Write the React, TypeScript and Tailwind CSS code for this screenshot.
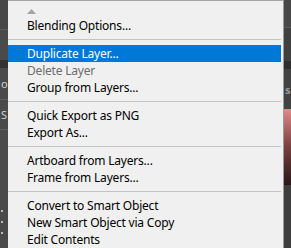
import React from "react";

type Item = { label: string; state?: "hl" | "dis" } | "sep";

const items: Item[] = [
  { label: "Blending Options..." },
  "sep",
  { label: "Duplicate Layer...", state: "hl" },
  { label: "Delete Layer", state: "dis" },
  { label: "Group from Layers..." },
  "sep",
  { label: "Quick Export as PNG" },
  { label: "Export As..." },
  "sep",
  { label: "Artboard from Layers..." },
  { label: "Frame from Layers..." },
  "sep",
  { label: "Convert to Smart Object" },
  { label: "New Smart Object via Copy" },
  { label: "Edit Contents" },
];

export default function App() {
  return (
    <div
      className="w-[291px] h-[248px] overflow-hidden flex bg-[#3c3c3c]"
      style={{ fontFamily: '"Noto Sans", "Open Sans", Arial, sans-serif' }}
    >
      {/* left strip */}
      <div className="w-[8px] shrink-0 flex flex-col bg-[#4a4a4a] text-[11px] leading-none text-[#d0d0d0] overflow-hidden">
        <div className="h-[30px] bg-[#474747] border-b border-[#5c5c5c]" />
        <div className="h-[30px]" />
        <div className="h-[8px] bg-[#323232]" />
        <div className="h-[32px] border-b border-[#5e5e5e] flex items-center pl-[1px]">o</div>
        <div className="h-[30px] border-b border-[#5e5e5e] flex items-center pl-[1px]">S</div>
        <div className="h-[80px]" />
        <div className="flex flex-col gap-[9px] pl-[1px]">
          <div className="w-[2px] h-[2px] bg-[#bbbbbb]" />
          <div className="w-[2px] h-[2px] bg-[#bbbbbb]" />
          <div className="w-[2px] h-[2px] bg-[#bbbbbb]" />
        </div>
      </div>

      {/* menu */}
      <div className="w-[276px] shrink-0 h-full bg-[#f0f0f0] border-t border-[#a6a6a6] border-r border-r-[#9a9a9a] pr-[2px] flex flex-col text-[12px] leading-[17px] tracking-[-0.2px] text-black">
        <div className="h-[20px] pl-[19px] pt-[8px]">
          <svg width="9" height="5" viewBox="0 0 9 5" className="block">
            <polygon points="4.5,0 9,5 0,5" fill="#a3a3a3" />
          </svg>
        </div>
        {items.map((it, i) =>
          it === "sep" ? (
            <div key={i} className="py-[5px]">
              <div className="h-[1px] bg-[#c3c3c3]" />
            </div>
          ) : (
            <div
              key={i}
              className={
                "h-[17px] pl-[19px] whitespace-nowrap " +
                (it.state === "hl"
                  ? "bg-[#0078d7] text-white"
                  : it.state === "dis"
                  ? "text-[#6d6d6d]"
                  : "text-black")
              }
            >
              {it.label}
            </div>
          )
        )}
      </div>

      {/* right strip */}
      <div className="flex-1 flex flex-col bg-[#3a3a3a] text-[11px] leading-none text-[#9a9a9a] overflow-hidden">
        <div className="h-[28px] bg-[#484848] border-b border-[#5a5a5a]" />
        <div className="h-[33px] bg-[#404040]" />
        <div className="h-[8px] bg-[#2e2e2e]" />
        <div className="h-[40px] bg-[#424242] flex items-center pl-[1px] font-bold">s</div>
        <div className="h-[76px] bg-gradient-to-b from-[#e48a8a] via-[#7a4040] to-[#2a1818]" />
        <div className="flex-1 bg-[#3e3e3e]" />
      </div>
    </div>
  );
}
